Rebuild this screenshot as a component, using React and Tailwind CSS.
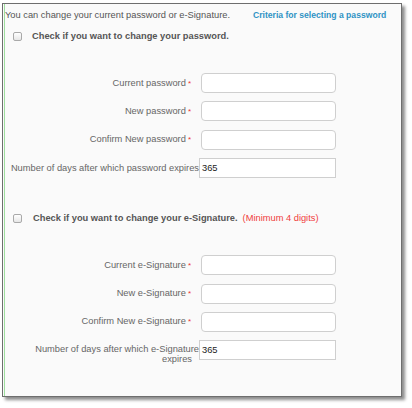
import React from "react";

const Field = ({ label }) => (
  <div className="flex items-center">
    <div className="w-[196px] text-right text-[#666] pr-[10px]">
      {label}
      <span className="text-[#e33] ml-[2px] text-[8px] align-top">*</span>
    </div>
    <div className="h-[20px] w-[135px] border border-[#cfcfcf] bg-white rounded-[4px]" />
  </div>
);

const Box = () => (
  <span className="ml-[8px] w-[9px] h-[9px] rounded-[2px] border border-[#a9a9a9] bg-gradient-to-b from-white to-[#e6e6e6]" />
);

export default function App() {
  return (
    <div
      className="w-[412px] h-[408px] bg-white pl-[2px] pt-[3px] text-[9.3px] leading-[11px]"
      style={{ fontFamily: '"Liberation Sans", Arial, sans-serif' }}
    >
      <div className="w-[400px] h-[394px] border border-[#6e6e6e] bg-[#fafafa] shadow-[3px_3px_3px_rgba(0,0,0,0.45)] flex">
        <div className="ml-[1px] flex-1 border-l border-[#9fdf9f]">
          {/* intro */}
          <div className="flex items-center h-[22px] text-[#555]">
            <span>You can change your current password or e-Signature.</span>
            <span className="ml-[23px] font-bold text-[8.6px] text-[#2f93c4]">Criteria for selecting a password</span>
          </div>

          <div className="flex items-center h-[20px]">
            <Box />
            <div className="ml-[10px] font-bold text-[#555]">Check if you want to change your password.</div>
          </div>

          {/* password fields */}
          <div className="mt-[27px] flex flex-col gap-[8.4px]">
            <Field label="Current password" />
            <Field label="New password" />
            <Field label="Confirm New password" />
            <div className="flex items-center">
              <div className="w-[194px] pl-[5px] text-right text-[#666] whitespace-nowrap">
                Number of days after which password expires
              </div>
              <div className="h-[20px] w-[137px] border border-[#cfcfcf] bg-white text-[#222] pl-[2px] flex items-center">
                365
              </div>
            </div>
          </div>

          <div className="mt-[30px] flex items-center h-[20px]">
            <Box />
            <div className="ml-[11px] font-bold text-[#555]">Check if you want to change your e-Signature.</div>
            <div className="ml-[5px] text-[#f03c3c]">(Minimum 4 digits)</div>
          </div>

          {/* e-signature fields */}
          <div className="mt-[27px] flex flex-col gap-[8.4px]">
            <Field label="Current e-Signature" />
            <Field label="New e-Signature" />
            <Field label="Confirm New e-Signature" />
            <div className="flex items-start">
              <div className="w-[194px] pt-[4px] leading-[10px] text-right text-[#666]">
                <div className="whitespace-nowrap">Number of days after which e-Signature</div>
                <div className="pr-[7px]">expires</div>
              </div>
              <div className="h-[20px] w-[137px] border border-[#cfcfcf] bg-white text-[#222] pl-[2px] flex items-center">
                365
              </div>
            </div>
          </div>
        </div>
      </div>
    </div>
  );
}
